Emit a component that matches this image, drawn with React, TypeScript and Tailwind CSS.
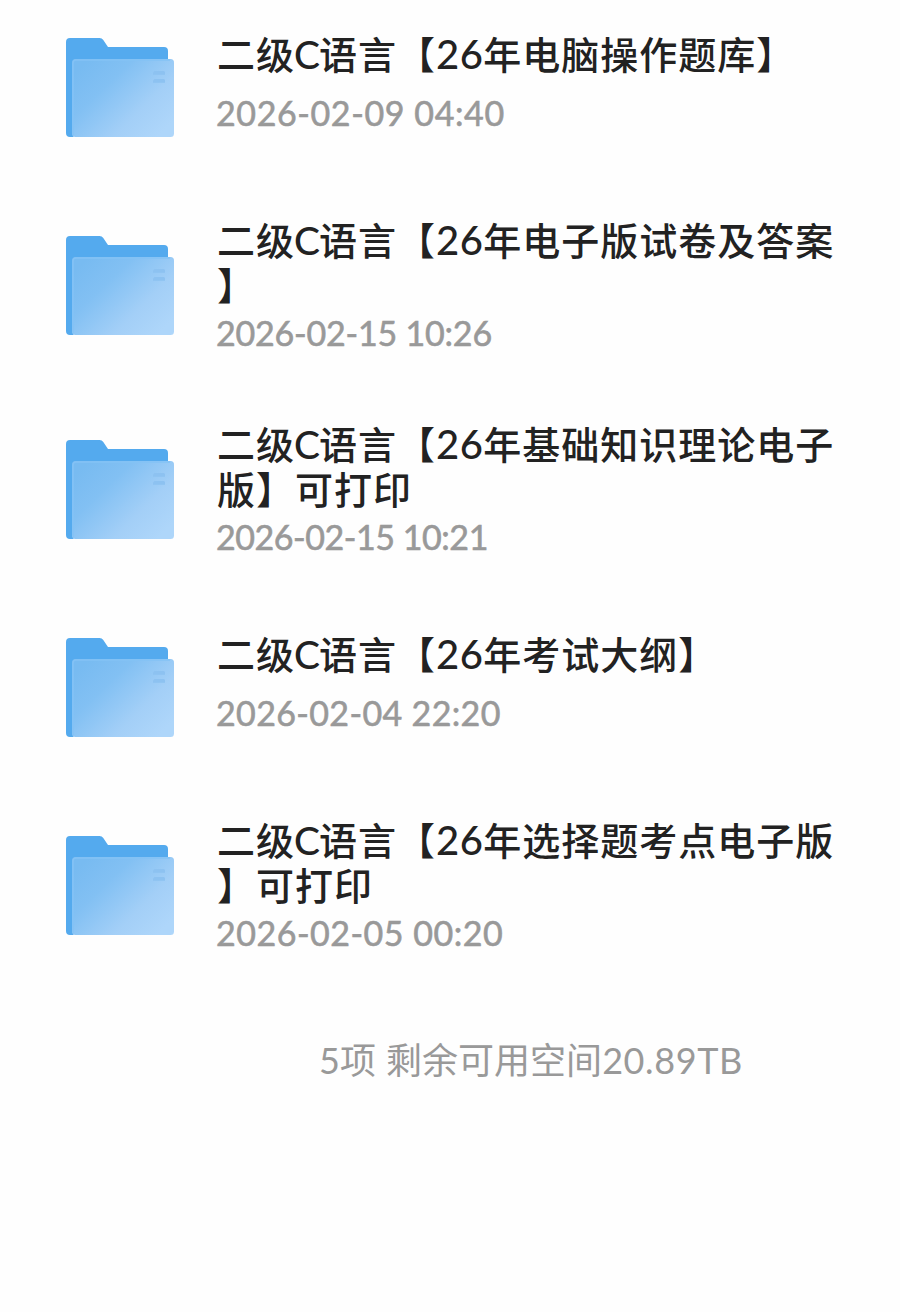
import clsx from "clsx";

type Folder = {
  lines: string[];
  date: string;
  dateClass: string;
};

const folders: Folder[] = [
  {
    lines: ["二级C语言【26年电脑操作题库】"],
    date: "2026-02-09 04:40",
    dateClass: "tracking-[0.6px]",
  },
  {
    lines: ["二级C语言【26年电子版试卷及答案", "】"],
    date: "2026-02-15 10:26",
    dateClass: "tracking-[-0.2px]",
  },
  {
    lines: ["二级C语言【26年基础知识理论电子", "版】可打印"],
    date: "2026-02-15 10:21",
    dateClass: "tracking-[-0.45px]",
  },
  {
    lines: ["二级C语言【26年考试大纲】"],
    date: "2026-02-04 22:20",
    dateClass: "tracking-[0.35px]",
  },
  {
    lines: ["二级C语言【26年选择题考点电子版", "】可打印"],
    date: "2026-02-05 00:20",
    dateClass: "tracking-[0.5px]",
  },
];

function FolderIcon() {
  return (
    <svg width="108" height="99" viewBox="0 0 108 99" className="mt-5 shrink-0">
      <defs>
        <linearGradient id="front" x1="0.05" y1="0.15" x2="0.95" y2="0.85">
          <stop offset="0" stopColor="#78bbf1" />
          <stop offset="0.3" stopColor="#82c0f3" />
          <stop offset="0.7" stopColor="#a3cff7" />
          <stop offset="1" stopColor="#aed6fa" />
        </linearGradient>
      </defs>
      <path
        d="M4 0H33.5Q36 0 37.3 1.9L42 9H98Q102 9 102 13V96H10L7 99H4Q0 99 0 95V4Q0 0 4 0Z"
        fill="#54aaee"
      />
      <rect x="6" y="21" width="102" height="78" rx="3.5" fill="url(#front)" />
      <path d="M7 97V25Q7 22 10 22H104" fill="none" stroke="#84c2f5" strokeWidth="1.6" />
      <path d="M88.5 33H98L99 34V36.8H87V34.5Z" fill="#8dc2f1" />
      <path d="M88.5 41H98L99 42V44.8H87V42.5Z" fill="#8dc2f1" />
    </svg>
  );
}

// Latin runs are set slightly larger than the Chinese text around them
function TitleLine({ text }: { text: string }) {
  return (
    <div className="h-[45px] leading-[45px] whitespace-nowrap">
      {text.split(/([A-Z]+|[0-9]+)/).map((part, i) => {
        if (/^[A-Z]+$/.test(part)) {
          return (
            <span key={i} className="-mr-px -ml-px text-[39px] leading-none tracking-[0px]">
              {part}
            </span>
          );
        }
        if (/^[0-9]+$/.test(part)) {
          return (
            <span key={i} className="text-[40px] leading-none tracking-[0.4px]">
              {part}
            </span>
          );
        }
        return <span key={i}>{part}</span>;
      })}
    </div>
  );
}

function FolderRow({ folder }: { folder: Folder }) {
  const wrapped = folder.lines.length > 1;

  return (
    <li className="flex h-[198px] items-start gap-[43px] pl-[66px] nth-[3]:mt-1.5">
      <FolderIcon />
      <div className={wrapped ? "pt-0.5" : "pt-[14px]"}>
        <div className="text-[38px] font-medium tracking-[1px] text-[#222222]">
          {folder.lines.map((line) => (
            <TitleLine key={line} text={line} />
          ))}
        </div>
        <div
          className={clsx(
            "-ml-px h-12 text-[34px] leading-[48px] whitespace-nowrap text-[#999999] [-webkit-text-stroke:0.6px_#999999]",
            wrapped ? "mt-px" : "mt-3",
            folder.dateClass
          )}
        >
          {folder.date}
        </div>
      </div>
    </li>
  );
}

export default function App() {
  return (
    <main className="min-h-screen w-full overflow-hidden bg-[#fefefe] pt-[18px] font-['Lato','Noto_Sans_CJK_SC',sans-serif]">
      <ul>
        {folders.map((folder) => (
          <FolderRow key={folder.date} folder={folder} />
        ))}
      </ul>
      <footer className="mt-[19px] pl-[319px] text-[36px] leading-[54px] whitespace-nowrap text-[#999999]">
        5项 <span className="ml-px">剩余可用空间</span>
        <span className="tracking-[0.6px]">20.89TB</span>
      </footer>
    </main>
  );
}
